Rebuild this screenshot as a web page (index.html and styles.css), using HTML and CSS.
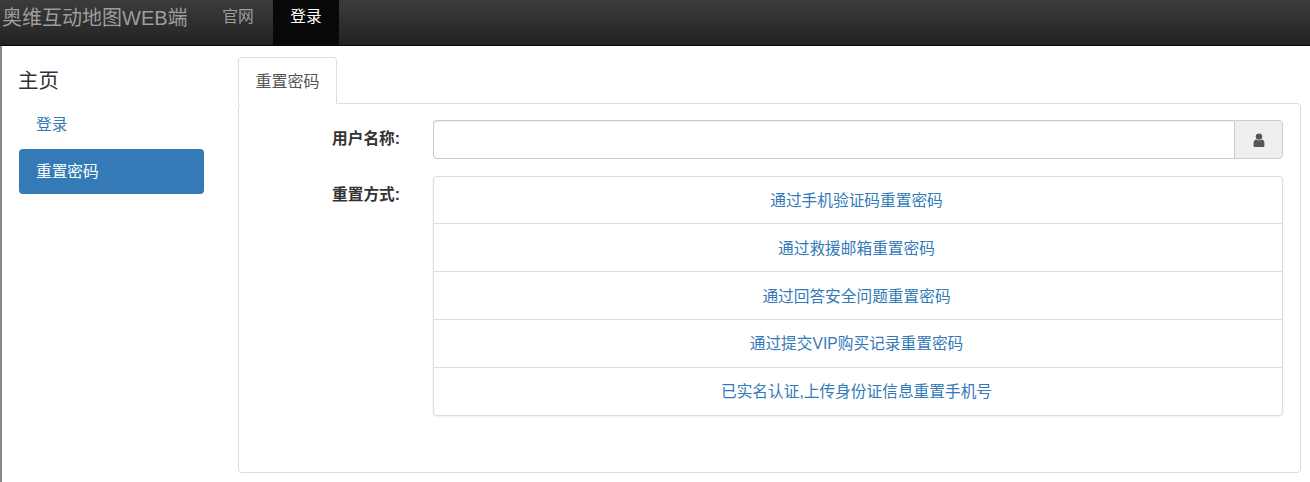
FILE: index.html
```html
<!DOCTYPE html>
<html lang="zh">
<head>
<meta charset="utf-8">
<title>重置密码</title>
<link rel="stylesheet" href="styles.css">
</head>
<body>
<nav class="navbar">
  <a class="brand">奥维互动地图WEB端</a>
  <a class="nav-link">官网</a>
  <a class="nav-link active">登录</a>
</nav>
<div class="page">
  <aside class="sidebar">
    <h4 class="side-title">主页</h4>
    <a class="pill">登录</a>
    <a class="pill active">重置密码</a>
  </aside>
  <main class="content">
    <div class="tabs"><a class="tab">重置密码</a></div>
    <div class="panel">
      <div class="row row-user">
        <label class="label">用户名称:</label>
        <div class="input-group">
          <input class="input" type="text">
          <span class="addon">
            <svg class="icon" viewBox="0 0 12 14" width="12" height="14"><circle cx="6" cy="3.6" r="3.2"/><path d="M0.6 13.2V9.6C0.6 7.8 1.8 6.6 3.3 6.4C4 7 5 7.3 6 7.3C7 7.3 8 7 8.7 6.4C10.2 6.6 11.4 7.8 11.4 9.6V13.2C11.4 13.6 11 14 10.6 14H1.4C1 14 0.6 13.6 0.6 13.2Z"/></svg>
          </span>
        </div>
      </div>
      <div class="row">
        <label class="label">重置方式:</label>
        <div class="list">
          <a class="item">通过手机验证码重置密码</a>
          <a class="item item-low">通过救援邮箱重置密码</a>
          <a class="item item-low">通过回答安全问题重置密码</a>
          <a class="item">通过提交VIP购买记录重置密码</a>
          <a class="item">已实名认证,上传身份证信息重置手机号</a>
        </div>
      </div>
    </div>
  </main>
</div>
</body>
</html>
```
FILE: styles.css
```css
* { box-sizing: border-box; }
html, body { height: 100%; }
body {
  margin: 0;
  font-family: "Liberation Sans", "Noto Sans CJK SC", sans-serif;
  font-size: 15.7px;
  line-height: 20px;
  color: #333;
  background: #fff;
  overflow: hidden;
}
.navbar {
  display: flex;
  height: 46px;
  background: linear-gradient(to bottom, #3c3c3c 0, #222 100%);
  border-bottom: 1px solid #080808;
}
.brand {
  width: 203px;
  padding: 8px 0 0 2px;
  font-size: 20px;
  line-height: 20px;
  color: #9d9d9d;
}
.nav-link {
  width: 70px;
  padding: 7px 0 0;
  text-align: center;
  color: #9d9d9d;
}
.nav-link.active {
  width: 66px;
  color: #fff;
  background: #080808;
}
.page {
  display: flex;
  height: 436px;
  border-left: 2px solid #888;
}
.sidebar {
  width: 202px;
  flex: none;
  padding: 0 0 0 17px;
}
.side-title {
  margin: 25px 0 11px -1px;
  font-size: 20.5px;
  font-weight: 400;
  line-height: 20px;
}
.pill {
  display: block;
  width: 185px;
  height: 45px;
  padding: 0 17px;
  line-height: 45px;
  border-radius: 4px;
  color: #337ab7;
}
.pill + .pill { margin-top: 2px; }
.pill.active { color: #fff; background: #337ab7; }
.content {
  width: 1063px;
  flex: none;
  margin: 11px 0 0 34px;
}
.tabs { display: flex; height: 47px; }
.tab {
  position: relative;
  z-index: 1;
  width: 99px;
  height: 47px;
  padding: 14px 0 0;
  text-align: center;
  font-size: 16px;
  color: #555;
  background: #fff;
  border: 1px solid #ddd;
  border-bottom-color: #fff;
  border-radius: 4px 4px 0 0;
}
.panel {
  height: 370px;
  margin-top: -1px;
  padding: 16px 17px 0 0;
  border: 1px solid #ddd;
  border-radius: 4px;
}
.row { display: flex; }
.row-user { margin-bottom: 17px; }
.label {
  width: 161px;
  flex: none;
  padding-top: 9px;
  font-weight: 700;
  text-align: right;
}
.input-group {
  display: flex;
  width: 850px;
  height: 39px;
  margin-left: 33px;
}
.input {
  flex: 1;
  min-width: 0;
  height: 39px;
  padding: 6px 12px;
  border: 1px solid #ccc;
  border-right: 0;
  border-radius: 4px 0 0 4px;
  box-shadow: inset 0 1px 1px rgba(0, 0, 0, .075);
}
.addon {
  display: flex;
  align-items: center;
  justify-content: center;
  width: 49px;
  color: #555;
  background: #eee;
  border: 1px solid #ccc;
  border-radius: 0 4px 4px 0;
}
.icon { fill: #555; }
.list {
  width: 850px;
  margin-left: 33px;
  background: #fff;
  border: 1px solid #ddd;
  border-radius: 4px;
  box-shadow: 0 1px 2px rgba(0, 0, 0, .075);
}
.item {
  display: block;
  height: 48px;
  padding: 14px 3px 0 0;
  text-align: center;
  color: #337ab7;
  border-bottom: 1px solid #ddd;
}
.item-low { padding-top: 15px; }
.item:first-child { height: 47px; }
.item:last-child { height: 47px; border-bottom: 0; }
```
